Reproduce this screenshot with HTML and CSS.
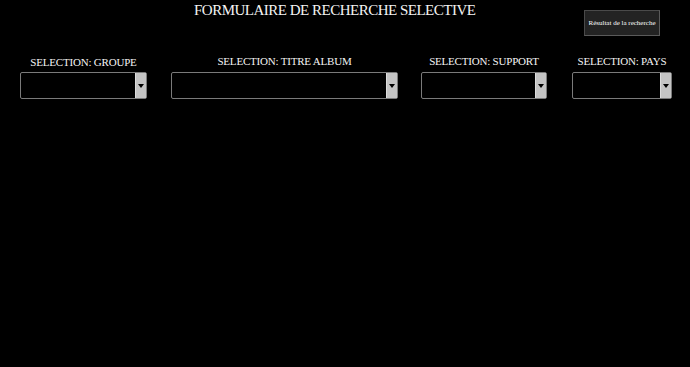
FILE: index.html
```html
<!DOCTYPE html>
<html lang="fr">
<head>
<meta charset="utf-8">
<title>Formulaire de recherche selective</title>
<link rel="stylesheet" href="styles.css">
</head>
<body>
<div class="page">
  <header class="header">
    <h1 class="title">FORMULAIRE DE RECHERCHE SELECTIVE</h1>
    <button class="result-btn" type="button">Résultat de la recherche</button>
  </header>
  <div class="filters">
    <div class="field field-groupe">
      <label class="field-label field-label-low">SELECTION: GROUPE</label>
      <div class="select"><span class="arrow"></span></div>
    </div>
    <div class="field field-titre">
      <label class="field-label">SELECTION: TITRE ALBUM</label>
      <div class="select"><span class="arrow"></span></div>
    </div>
    <div class="field field-support">
      <label class="field-label">SELECTION: SUPPORT</label>
      <div class="select"><span class="arrow"></span></div>
    </div>
    <div class="field field-pays">
      <label class="field-label">SELECTION: PAYS</label>
      <div class="select"><span class="arrow"></span></div>
    </div>
  </div>
</div>
</body>
</html>
```

FILE: styles.css
```css
html, body {
  margin: 0;
  padding: 0;
  background: #000;
}

body {
  width: 690px;
  height: 367px;
  overflow: hidden;
  font-family: "Liberation Serif", "Times New Roman", serif;
  color: #f4f4f4;
}

.header {
  display: flex;
  align-items: flex-start;
  height: 50px;
}

.title {
  margin: 2px 0 0 194px;
  font-size: 15px;
  line-height: 17px;
  font-weight: normal;
  letter-spacing: -0.5px;
  white-space: nowrap;
}

.result-btn {
  margin: 10px 30px 0 auto;
  width: 76px;
  height: 26px;
  padding: 0;
  background: #232323;
  border: 1px solid #4a4a4a;
  border-right-color: #5a5a5a;
  border-bottom-color: #5a5a5a;
  color: #ffffff;
  font-family: "Liberation Serif", "Times New Roman", serif;
  font-size: 7px;
  line-height: 9px;
  white-space: nowrap;
}

.filters {
  display: flex;
  align-items: flex-start;
  padding-left: 20px;
  margin-top: 5px;
}

.field {
  display: flex;
  flex-direction: column;
  align-items: center;
}

.field-groupe { width: 127px; }
.field-titre { width: 227px; margin-left: 24px; }
.field-support { width: 126px; margin-left: 23px; }
.field-pays { width: 100px; margin-left: 25px; }

.field-label {
  font-size: 11px;
  line-height: 13px;
  letter-spacing: -0.2px;
  white-space: nowrap;
  margin-bottom: 4px;
}

.field-label-low {
  margin-top: 1px;
  margin-bottom: 3px;
}

.select {
  box-sizing: border-box;
  width: 100%;
  height: 27px;
  border: 1px solid #7a7a7a;
  border-radius: 2px;
  background: #000;
  display: flex;
  justify-content: flex-end;
}

.arrow {
  box-sizing: border-box;
  width: 11px;
  height: 100%;
  background: #c4c4c4;
  border-left: 1px solid #dcdcdc;
  display: flex;
  align-items: center;
  justify-content: center;
}

.arrow::before {
  content: "";
  display: block;
  width: 0;
  height: 0;
  border-left: 3px solid transparent;
  border-right: 3px solid transparent;
  border-top: 4px solid #000;
}
```
